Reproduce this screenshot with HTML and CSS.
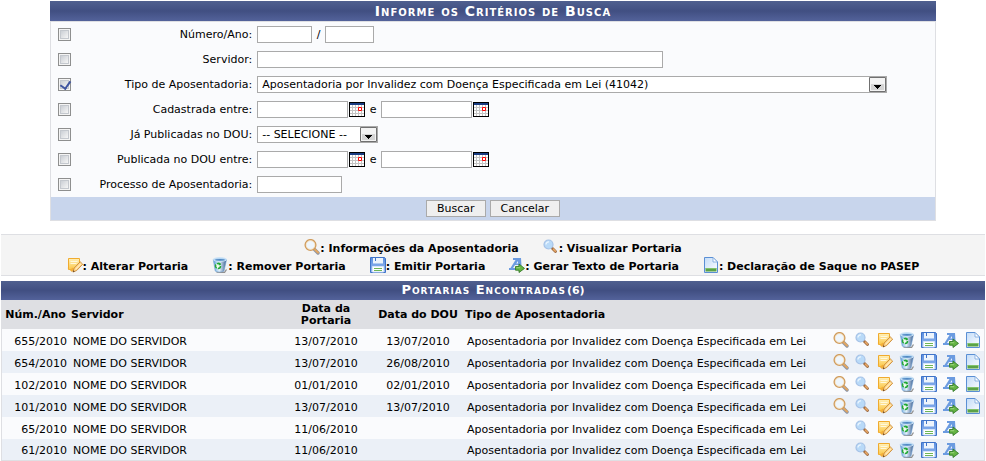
FILE: index.html
```html
<!DOCTYPE html>
<html lang="pt-BR">
<head>
<meta charset="utf-8">
<title>Portarias de Aposentadoria</title>
<link rel="stylesheet" href="styles.css">
</head>
<body>
<svg class="sprite" aria-hidden="true">
  <defs>
    <linearGradient id="g-bin" x1="0" x2="1" y1="0" y2="0"><stop offset="0" stop-color="#5b9fd8"/><stop offset=".45" stop-color="#e6f3fc"/><stop offset="1" stop-color="#3a5f92"/></linearGradient>
    <linearGradient id="g-note" x1="0" x2="0" y1="0" y2="1"><stop offset="0" stop-color="#fff0b8"/><stop offset="1" stop-color="#fbc84a"/></linearGradient>
    <linearGradient id="g-page" x1="0" x2="1" y1="0" y2="1"><stop offset="0" stop-color="#c3dcf8"/><stop offset="1" stop-color="#ffffff"/></linearGradient>
    <linearGradient id="g-disk" x1="0" x2="0" y1="0" y2="1"><stop offset="0" stop-color="#5a8ee0"/><stop offset="1" stop-color="#9bbcf0"/></linearGradient>
  </defs>
  <symbol id="i-info" viewBox="0 0 16 16">
    <path d="M10.500 10.500l3.500 3.500" stroke="#8a93a4" stroke-width="3.400" stroke-linecap="round"/>
    <path d="M10.300 10l3.700 3.500" stroke="#e0a662" stroke-width="2.200" stroke-linecap="round"/>
    <circle cx="6.500" cy="6" r="5.300" fill="#eef6fd" stroke="#d09c5c" stroke-width="1.500"/>
    <circle cx="6.500" cy="6" r="4.300" fill="none" stroke="#f7e3c4" stroke-width=".8"/>
  </symbol>
  <symbol id="i-view" viewBox="0 0 16 16">
    <path d="M9.500 9.500l3 3" stroke="#95633a" stroke-width="2.800" stroke-linecap="round"/>
    <path d="M10.300 10.100l2 2" stroke="#e9a765" stroke-width="1.500" stroke-linecap="round"/>
    <circle cx="5.500" cy="5.500" r="4.500" fill="#b9daf8" stroke="#a6c2e6" stroke-width="1.200"/>
    <path d="M3 5.500a2.600 2.600 0 0 1 3-2.600" stroke="#eaf5ff" stroke-width="1.300" fill="none"/>
  </symbol>
  <symbol id="i-edit" viewBox="0 0 16 16">
    <path d="M1.500 1.500h11v7l-4 4h-7z" fill="url(#g-note)" stroke="#f0ab2e"/>
    <path d="M3.500 4.500h7M3.500 6.500h6" stroke="#fff8dc"/>
    <path d="M0 10.500l3 2 3-2 1 2-2 2.500z" fill="#f3b03a"/>
    <path d="M6 15l1.200-4 6-6.200 2.500 2.400-6 6.300z" fill="#ffd68a" stroke="#c98a38" stroke-width=".9"/>
    <path d="M8.500 12.300l5.300-5.500" stroke="#fff3cd" stroke-width="1"/>
    <path d="M5.800 15.300l.6-2 1.400 1.300z" fill="#6b4a2a"/>
  </symbol>
  <symbol id="i-bin" viewBox="0 0 16 16">
    <path d="M4.500 15l8 .5 2-3" stroke="#909090" stroke-width="1.300" fill="none"/>
    <path d="M1.300 2.600l1.900 11.400c1.800 1.400 6.800 1.400 8.800 0L14.500 2.600z" fill="url(#g-bin)" stroke="#6f9dcf" stroke-width=".6"/>
    <ellipse cx="7.900" cy="2.500" rx="6.700" ry="1.900" fill="#b4d7f4" stroke="#cfe3f5" stroke-width=".9"/>
    <ellipse cx="8" cy="2.800" rx="4.900" ry=".9" fill="#5088c2"/>
    <circle cx="6" cy="9" r="2.500" fill="#f2fbf2" stroke="#22a935" stroke-width="1.500" stroke-dasharray="4 1.200"/>
    <path d="M6.500 5l2.500 1.700-2.200 1.700z" fill="#22a935"/>
  </symbol>
  <symbol id="i-save" viewBox="0 0 16 16">
    <path d="M.5.500h14l1 1v14H.500z" fill="url(#g-disk)" stroke="#3f73c8"/>
    <path d="M3 1h10v5.500H3z" fill="#edf4fc"/>
    <path d="M5.500 1v3" stroke="#3f73c8"/>
    <path d="M2.500 9.500h11v5.500h-11z" fill="#fff" stroke="#d6e5f9"/>
    <path d="M4 11.500h8M4 13.500h8" stroke="#6fb656"/>
  </symbol>
  <symbol id="i-text" viewBox="0 0 16 16">
    <path d="M4 1h8l.5 8H9.500V8H6l-2 3h2v2H0v-2h1.500L6.500 3H4z" fill="#6b9be0"/>
    <path d="M9 4v2.500H7.200z" fill="#eef4fc"/>
    <path d="M6.500 9.500h3.500V7l5.500 4.400-5.500 4.100v-2.300H6.500z" fill="#65b444" stroke="#347c28" stroke-width=".9"/>
    <path d="M7.500 10.700h3.700" stroke="#a9dc8c" stroke-width=".8"/>
  </symbol>
  <symbol id="i-page" viewBox="0 0 16 16">
    <path d="M1.500.500H10L14.500 5v10.500h-13z" fill="url(#g-page)" stroke="#5a8fd4"/>
    <path d="M10 .500V5h4.500z" fill="#fff" stroke="#76a4dd" stroke-width=".8"/>
    <path d="M2.500 11.300h11v3.200h-11z" fill="#5ba247"/>
    <path d="M2.500 11.500h11" stroke="#82c36a"/>
  </symbol>
  <symbol id="i-cal" viewBox="0 0 16 15">
    <path d="M0 0h16v15H0z"/>
    <path d="M1 1h14v13H1z" fill="#fff"/>
    <path d="M3.500 3v11M6.500 3v11M9.500 3v11M12.500 3v11M1 5.500h14M1 8.500h14M1 11.500h14" stroke="#c4c4c4"/>
    <path d="M1 1h14v2H1z" fill="#183c82"/>
    <path d="M9.500 5.500h3v3h-3z" fill="#fff" stroke="#f00"/>
  </symbol>
  <symbol id="i-drop" viewBox="0 0 17 15">
    <path d="M.5.500h16v14H.500z" fill="#f3f3f3" stroke="#707070"/>
    <path d="M2 7h13v6H2z" fill="#d4d4d4"/>
    <path d="M5 8h7v1h-1v1h-1v1H9v1H8v-1H7v-1H6V9H5z"/>
  </symbol>
</svg>

<form class="search">
  <h2 class="bar search-title">Informe os Critérios de Busca</h2>
  <div class="criteria">
    <div class="row"><input type="checkbox" aria-label="Filtrar por número/ano"><label for="numero">Número/Ano:</label><div class="field"><input class="w-num" id="numero" type="text"><span class="slash">/</span><input class="w-year" type="text" aria-label="Ano"></div></div>
    <div class="row"><input type="checkbox" aria-label="Filtrar por servidor"><label for="servidor">Servidor:</label><div class="field"><input class="w-name" id="servidor" type="text"></div></div>
    <div class="row"><input type="checkbox" checked aria-label="Filtrar por tipo"><label for="tipo">Tipo de Aposentadoria:</label><div class="field"><span class="drop w-type"><select id="tipo"><option>Aposentadoria por Invalidez com Doença Especificada em Lei (41042)</option></select><svg><use href="#i-drop"/></svg></span></div></div>
    <div class="row"><input type="checkbox" aria-label="Filtrar por cadastro"><label for="cad">Cadastrada entre:</label><div class="field"><input class="w-date" id="cad" type="text"><button class="cal" type="button" aria-label="Calendário"><svg><use href="#i-cal"/></svg></button><span class="and">e</span><input class="w-date" type="text" aria-label="Cadastrada até"><button class="cal" type="button" aria-label="Calendário"><svg><use href="#i-cal"/></svg></button></div></div>
    <div class="row"><input type="checkbox" aria-label="Filtrar por publicadas"><label for="dou">Já Publicadas no DOU:</label><div class="field"><span class="drop w-dou"><select id="dou"><option>-- SELECIONE --</option></select><svg><use href="#i-drop"/></svg></span></div></div>
    <div class="row"><input type="checkbox" aria-label="Filtrar por publicação"><label for="pub">Publicada no DOU entre:</label><div class="field"><input class="w-date" id="pub" type="text"><button class="cal" type="button" aria-label="Calendário"><svg><use href="#i-cal"/></svg></button><span class="and">e</span><input class="w-date" type="text" aria-label="Publicada até"><button class="cal" type="button" aria-label="Calendário"><svg><use href="#i-cal"/></svg></button></div></div>
    <div class="row"><input type="checkbox" aria-label="Filtrar por processo"><label for="proc">Processo de Aposentadoria:</label><div class="field"><input class="w-proc" id="proc" type="text"></div></div>
  </div>
  <div class="actions"><button class="btn" type="button">Buscar</button><button class="btn" type="button">Cancelar</button></div>
</form>

<div class="legend">
  <div class="legend-line">
    <span><svg class="icon"><use href="#i-info"/></svg>: Informações da Aposentadoria</span>
    <span><svg class="icon"><use href="#i-view"/></svg>: Visualizar Portaria</span>
  </div>
  <div class="legend-line">
    <span><svg class="icon"><use href="#i-edit"/></svg>: Alterar Portaria</span>
    <span><svg class="icon"><use href="#i-bin"/></svg>: Remover Portaria</span>
    <span><svg class="icon"><use href="#i-save"/></svg>: Emitir Portaria</span>
    <span><svg class="icon"><use href="#i-text"/></svg>: Gerar Texto de Portaria</span>
    <span><svg class="icon"><use href="#i-page"/></svg>: Declaração de Saque no PASEP</span>
  </div>
</div>

<table class="results">
  <caption class="bar"><span class="found">Portarias Encontradas</span>(6)</caption>
  <colgroup><col class="c-num"><col class="c-name"><col class="c-date"><col class="c-date"><col><col class="c-act"></colgroup>
  <thead>
    <tr><th>Núm./Ano</th><th class="left">Servidor</th><th>Data da<br>Portaria</th><th>Data do DOU</th><th class="left">Tipo de Aposentadoria</th><td></td></tr>
  </thead>
  <tbody id="rows"></tbody>
</table>
<script src="script.js"></script>
</body>
</html>
```
FILE: styles.css
```css
* {
  box-sizing: border-box;
}

body {
  margin: 1px 1px 0;
  background: #fff;
  color: #000;
  font: 11px/14px Verdana, "DejaVu Sans", sans-serif;
}

.sprite {
  position: absolute;
  width: 0;
  height: 0;
}

.bar {
  background: linear-gradient(#50608f, #414f82 50%, #53629a);
  color: #fff;
  font-weight: bold;
  text-align: center;
}

.search {
  width: 90%;
  margin: 0 auto 13px;
}

.search-title {
  margin: 0;
  font-size: 14px;
  line-height: 20px;
  font-variant: small-caps;
  letter-spacing: 1px;
}

.criteria {
  border: 1px solid #dedfe3;
  border-bottom: 0;
  background: #fafbfd;
}

.row {
  display: grid;
  grid-template-columns: 13px 181px 1fr;
  align-items: center;
  height: 25px;
  padding-left: 7px;
}

.row label {
  text-align: right;
}

.field {
  display: flex;
  align-items: center;
  padding-left: 5px;
}

input[type="text"],
select {
  height: 17px;
  margin: 0;
  padding: 0 4px;
  border: 1px solid #aaa;
  border-radius: 0;
  background: #fff;
  color: #000;
  font: inherit;
}

select {
  width: 100%;
  appearance: none;
}

input[type="checkbox"] {
  display: block;
  width: 13px;
  height: 13px;
  margin: 0;
  appearance: none;
  border: 1px solid #8e8f8f;
  background: linear-gradient(135deg, #cbcfd5, #f6f6f6) center / 7px 7px no-repeat, #f4f4f4;
  box-shadow: inset 0 0 0 1px #f4f4f4, inset 0 0 0 2px #c4c8ce;
}

input[type="checkbox"]:checked::after {
  content: "";
  display: block;
  width: 5px;
  height: 8px;
  margin: 0 0 0 3px;
  border: solid #3f55a0;
  border-width: 0 2px 2px 0;
  transform: rotate(35deg);
}

.w-num { width: 55px; }
.w-year { width: 49px; }
.w-name { width: 406px; }
.w-type { width: 630px; }
.w-date { width: 91px; }
.w-dou { width: 121px; }
.w-proc { width: 85px; }

.slash,
.and {
  text-align: center;
}

.slash { width: 13px; }
.and { width: 16px; }

.drop {
  display: block;
  position: relative;
}

.drop select {
  display: block;
}

.drop svg {
  position: absolute;
  top: 1px;
  right: 1px;
  width: 17px;
  height: 15px;
  pointer-events: none;
}

.cal {
  margin: 0 0 0 1px;
  padding: 0;
  border: 0;
  background: none;
}

.cal svg {
  display: block;
  width: 16px;
  height: 15px;
}

.actions {
  display: flex;
  justify-content: center;
  gap: 4px;
  padding: 3px 0;
  border: 1px solid #dedfe3;
  border-top: 0;
  background: #c8d5ec;
}

.btn {
  height: 17px;
  padding: 0 10px;
  border: 1px solid #aaa;
  background: #efefef;
  color: #000;
  font: inherit;
}

.legend {
  margin-bottom: 5px;
  padding: 4px 0 0;
  border: solid #dedfe3;
  border-width: 1px 0;
  background: #f4f4f4;
  font-weight: bold;
}

.legend-line {
  display: flex;
  justify-content: center;
  gap: 24px;
  height: 18px;
  line-height: 20px;
  white-space: nowrap;
}

.icon {
  width: 16px;
  height: 16px;
}

.legend .icon {
  vertical-align: -3px;
}

.results {
  width: 100%;
  table-layout: fixed;
  border-collapse: separate;
  border-spacing: 0;
}

.results caption {
  height: 19px;
  line-height: 18px;
}

.found {
  margin-right: 1px;
  font-variant: small-caps;
  font-size: 13px;
  letter-spacing: 1px;
}

.c-num { width: 69px; }
.c-name { width: 210px; }
.c-date { width: 92px; }
.c-act { width: 156px; }

thead th,
thead td {
  height: 29px;
  padding: 0 1px;
  background: #dedfe3;
  line-height: 12px;
  white-space: nowrap;
}

th.left {
  text-align: left;
}

tbody td {
  height: 22px;
  padding: 3px 3px 0;
  background: #fafbfd;
  white-space: nowrap;
}

tbody tr:nth-child(even) td {
  background: #ebf0f7;
}

tbody td:first-child {
  border-left: 1px solid #dedfe3;
  text-align: right;
}

tbody td:last-child {
  padding: 0 3px 0 0;
  border-right: 1px solid #dedfe3;
}

tbody tr:last-child td {
  border-bottom: 1px solid #dedfe3;
}

.center {
  text-align: center;
}

.tools {
  display: flex;
  justify-content: flex-end;
  gap: 6px;
}

.tools a,
.tools svg {
  display: block;
  width: 16px;
  height: 16px;
}
```
FILE: script.js
```javascript
const rows = [
  ["655/2010", "13/07/2010", "13/07/2010"],
  ["654/2010", "13/07/2010", "26/08/2010"],
  ["102/2010", "01/01/2010", "02/01/2010"],
  ["101/2010", "13/07/2010", "13/07/2010"],
  ["65/2010", "11/06/2010", ""],
  ["61/2010", "11/06/2010", ""]
];
const tools = [
  ["info", "Informações da Aposentadoria"],
  ["view", "Visualizar Portaria"],
  ["edit", "Alterar Portaria"],
  ["bin", "Remover Portaria"],
  ["save", "Emitir Portaria"],
  ["text", "Gerar Texto de Portaria"],
  ["page", "Declaração de Saque no PASEP"]
];

// Orders without a DOU date have no details or PASEP statement.
const tool = ([name, label], published) =>
  !published && (name === "info" || name === "page")
    ? "<a></a>"
    : `<a href="#" aria-label="${label}"><svg><use href="#i-${name}"/></svg></a>`;

document.getElementById("rows").innerHTML = rows.map(([num, date, dou]) => `
  <tr><td>${num}</td><td>NOME DO SERVIDOR</td><td class="center">${date}</td>
  <td class="center">${dou}</td><td>Aposentadoria por Invalidez com Doença Especificada em Lei</td>
  <td><div class="tools">${tools.map(t => tool(t, dou)).join("")}</div></td></tr>`).join("");
```
